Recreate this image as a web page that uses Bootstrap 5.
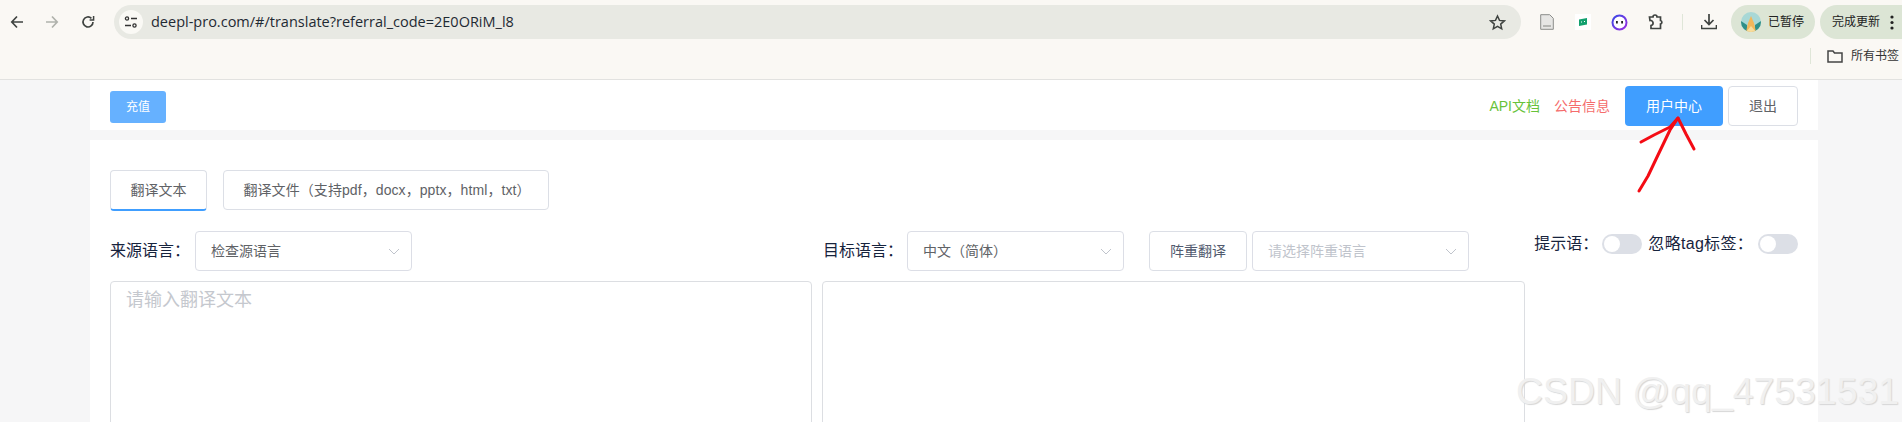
<!DOCTYPE html>
<html lang="zh-CN">
<head>
    <meta charset="UTF-8">
    <title>翻译</title>
    <link href="https://cdn.jsdelivr.net/npm/bootstrap@5.3.3/dist/css/bootstrap.min.css" rel="stylesheet">
    <style>
        html, body { height: 422px; overflow: hidden; }
        body { background: #f6f6f7; font-family: "Liberation Sans", "Noto Sans CJK SC", sans-serif; position: relative; color: #515a6e; }

        /* browser chrome */
        .chrome { height: 80px; background: #faf8f4; border-bottom: 1px solid #e2e2e0; padding: 5px 0 0 0; }
        .chrome-row { height: 34px; }
        .nav-ico { width: 37px; flex: none; display: flex; justify-content: center; }
        .nav-box { width: 114px; flex: none; padding-left: 0; }
        .addr { width: 1407px; flex: none; height: 34px; background: #e8e9e3; border-radius: 17px; padding: 0 15px 0 5px; }
        .addr-site { width: 24px; height: 24px; border-radius: 50%; background: #faf9f5; margin-right: 8px; }
        .addr-url { font-family: "Open Sans", "Liberation Sans", sans-serif; font-size: 14.5px; color: #1f2a33; }
        .ext-sep { width: 1px; height: 16px; background: #dfe6d8; margin-left: 18px; }
        .paused { width: 84px; height: 34px; border-radius: 17px; background: #dce5d5; font-size: 12px; color: #222; flex: none; padding-left: 10px; margin-left: 14px; gap: 7px; }
        .updated { width: 82px; height: 34px; border-radius: 17px 0 0 17px; background: #dce5d5; font-size: 12px; color: #222; flex: none; margin-left: 5px; padding-left: 12px; gap: 10px; white-space: nowrap; }
        .marks-row { height: 24px; margin-top: 5px; padding-right: 3px; font-size: 12px; color: #333; }
        .marks-sep { width: 1px; height: 16px; background: #dfe6d8; margin-right: 16px; }

        /* page */
        .page-wrap { width: 1728px; margin-left: 90px; }
        .top-panel { height: 50px; background: #fff; padding: 6px 20px; margin-bottom: 10px; }
        .recharge { width: 56px; height: 32px; margin-top: 5px; background: #66b1ff; color: #fff; font-size: 12px; border-radius: 3px; }
        .doc-link { font-size: 14px; color: #67c23a; margin-right: 14px; }
        .notice-link { font-size: 14px; color: #f56c6c; margin-right: 15px; }
        .user-btn { width: 98px; height: 40px; background: #409eff; color: #fff; font-size: 14px; border-radius: 4px; margin-right: 5px; }
        .plain-btn { height: 40px; background: #fff; border: 1px solid #dcdfe6; border-radius: 4px; color: #606266; font-size: 14px; display: flex; align-items: center; justify-content: center; }
        .logout-btn { width: 70px; }
        .main-panel { height: 282px; background: #fff; padding: 30px 20px 0 20px; }
        .tab-active { width: 97px; height: 41px; border-bottom: 2px solid #409eff; margin-right: 16px; }
        .tab-file { width: 326px; height: 40px; letter-spacing: .08px; padding-left: 2px; }
        .tools-row { margin-top: 20px; height: 40px; }
        .lang-label { font-size: 16px; color: #17233d; white-space: nowrap; }
        .lang-select { width: 217px; height: 40px; border: 1px solid #dcdee6; border-radius: 4px; padding: 0 11px 0 15px; font-size: 14px; color: #606266; flex: none; }
        .muted-val { color: #c0c4cc; }
        .heavy-btn { width: 98px; flex: none; margin: 0 5px 0 25px; color: #515a6e; }
        .switch-box { font-size: 16px; color: #17233d; white-space: nowrap; margin-top: -14px; }
        .tag-label { margin: 0 5px 0 6px; letter-spacing: .3px; }
        .fake-switch { width: 40px; height: 20px; border-radius: 10px; background: #dcdfe6; padding: 2px; flex: none; }
        .fake-switch span { display: block; width: 16px; height: 16px; border-radius: 50%; background: #fff; }
        .text-areas { margin-top: 10px; gap: 10px; }
        .text-box { width: 702px; height: 200px; flex: none; border: 1px solid #dcdee2; border-radius: 4px; padding: 5px 15px; font-size: 18px; color: #c5c8ce; }
        .text-box + .text-box { width: 703px; }

        /* overlays */
        .red-arrow { position: absolute; left: 0; top: 0; pointer-events: none; }
        .water { position: absolute; left: 1516px; top: 369px; font-size: 37.4px; line-height: 44px; color: #f0f0f0; text-shadow: 1px 1px 1px #d6d6d6; white-space: nowrap; }
    </style>
</head>
<body>
    <div class="chrome">
        <div class="d-flex align-items-center chrome-row">
            <div class="nav-box d-flex align-items-center">
                <div class="nav-ico" style="width:33px">
                    <svg width="14" height="14" viewBox="0 0 14 14" fill="none" stroke="#3f4340" stroke-width="1.7"><path d="M13 7H2M7 1.5 1.8 7 7 12.5"/></svg>
                </div>
                <div class="nav-ico">
                    <svg width="14" height="14" viewBox="0 0 14 14" fill="none" stroke="#b0b2ac" stroke-width="1.7"><path d="M1 7h11M7 1.5 12.2 7 7 12.5"/></svg>
                </div>
                <div class="nav-ico" style="width:36px">
                    <svg width="14" height="14" viewBox="0 0 14 14" fill="none" stroke="#3f4340" stroke-width="1.7"><path d="M12 7a5 5 0 1 1-1.6-3.7"/><path d="M12.6 1v4h-4" stroke-width="1.5"/></svg>
                </div>
            </div>
            <div class="addr d-flex align-items-center">
                <div class="addr-site d-flex align-items-center justify-content-center">
                    <svg width="14" height="14" viewBox="0 0 14 14" fill="none" stroke="#333" stroke-width="1.3"><circle cx="3" cy="3.5" r="1.6"/><path d="M7 3.5h6M1 10.5h6"/><circle cx="10.5" cy="10.5" r="1.6"/></svg>
                </div>
                <span class="addr-url">deepl-pro.com/#/translate?referral_code=2E0ORiM_l8</span>
                <svg class="ms-auto" width="17" height="17" viewBox="0 0 17 17" fill="none" stroke="#3f4340" stroke-width="1.5"><path d="m8.5 2 2 4.4 4.8.5-3.6 3.2 1 4.7-4.2-2.4-4.2 2.4 1-4.7L1.7 6.9l4.8-.5z"/></svg>
            </div>
            <svg style="margin-left:19px" width="14" height="16" viewBox="0 0 14 16"><path d="M.7.7h9l3.6 3.6v11H.7z" fill="#e6e6e4" stroke="#8b8d8a"/><path d="M3 11h8v2H3z" fill="#b5b6b3"/></svg>
            <svg style="margin-left:21px" width="16" height="16" viewBox="0 0 16 16"><rect width="16" height="16" fill="#fff"/><path d="M4 5.5l8-1.5v6.500l-8 1.500z" fill="#12a06e"/><path d="M6 7.500h1v1H6zM9 7h1v1H9z" fill="#fff"/></svg>
            <svg style="margin-left:20px" width="17" height="17" viewBox="0 0 17 17"><defs><linearGradient id="ringgrad" x1="0" y1="0" x2="1" y2="1"><stop offset="0" stop-color="#3a49e6"/><stop offset="1" stop-color="#9a2fe0"/></linearGradient></defs><circle cx="8.500" cy="8.500" r="7" fill="#fff" stroke="url(#ringgrad)" stroke-width="2"/><path d="M5 7h1.800v2.600H5zM10.200 7H12v2.600h-1.800z" fill="#222"/></svg>
            <svg style="margin-left:20px" width="16" height="16" viewBox="0 0 16 16" fill="none" stroke="#3f4340" stroke-width="1.7"><path d="M1.500 3H5a2 2 0 0 1 4 0h3.500v3.500a1.800 1.800 0 0 1 0 3.500v4.500H3v-3a2.200 2.200 0 0 0-1-5z"/></svg>
            <div class="ext-sep"></div>
            <svg style="margin-left:18px" width="16" height="16" viewBox="0 0 16 16" fill="none" stroke="#3f4340" stroke-width="1.700"><path d="M8 0v10M3.500 6 8 10.500 12.500 6M.500 11v3.500h15V11"/></svg>
            <div class="paused d-flex align-items-center">
                <svg width="20" height="20" viewBox="0 0 20 20"><clipPath id="avatarclip"><circle cx="10" cy="10" r="10"/></clipPath><g clip-path="url(#avatarclip)"><rect width="20" height="20" fill="#a8d8d6"/><path d="M0 9 6 13v7H0zM20 9l-6 4v7h6z" fill="#2f8f88"/><path d="M10 4l3 7 2 9H5l2-9z" fill="#f2b65a"/><path d="M5 20l5-6 5 6z" fill="#f7dc9c"/></g></svg>
                <span>已暂停</span>
            </div>
            <div class="updated d-flex align-items-center"><span>完成更新</span><svg width="4" height="15" viewBox="0 0 4 15" fill="#222"><circle cx="2" cy="2" r="1.600"/><circle cx="2" cy="7.500" r="1.600"/><circle cx="2" cy="13" r="1.600"/></svg></div>
        </div>
        <div class="marks-row d-flex align-items-center justify-content-end">
            <div class="marks-sep"></div>
            <svg width="16" height="13" viewBox="0 0 16 13" fill="none" stroke="#444" stroke-width="1.5"><path d="M1 1h5l1.500 2H15v9H1z"/></svg>
            <span class="ms-2 text-nowrap">所有书签</span>
        </div>
    </div>

    <div class="page-wrap">
        <div class="top-panel d-flex align-items-start">
            <button class="btn recharge p-0 border-0">充值</button>
            <div class="ms-auto d-flex align-items-center" style="height:40px">
                <span class="doc-link">API文档</span>
                <span class="notice-link">公告信息</span>
                <button class="btn user-btn p-0 border-0">用户中心</button>
                <div class="plain-btn logout-btn">退出</div>
            </div>
        </div>

        <div class="main-panel">
            <div class="d-flex">
                <div class="plain-btn tab-active">翻译文本</div>
                <div class="plain-btn tab-file">翻译文件（支持pdf，docx，pptx，html，txt）</div>
            </div>
            <div class="tools-row d-flex align-items-center">
                <span class="lang-label" style="width:85px">来源语言：</span>
                <div class="lang-select d-flex align-items-center justify-content-between">
                    <span>检查源语言</span>
                    <svg width="12" height="7" viewBox="0 0 12 7" fill="none" stroke="#c0c4cc"><path d="m1 1 5 5 5-5"/></svg>
                </div>
                <span class="lang-label" style="margin-left:411px;width:84px">目标语言：</span>
                <div class="lang-select d-flex align-items-center justify-content-between">
                    <span>中文（简体）</span>
                    <svg width="12" height="7" viewBox="0 0 12 7" fill="none" stroke="#c0c4cc"><path d="m1 1 5 5 5-5"/></svg>
                </div>
                <div class="plain-btn heavy-btn">阵重翻译</div>
                <div class="lang-select d-flex align-items-center justify-content-between">
                    <span class="muted-val">请选择阵重语言</span>
                    <svg width="12" height="7" viewBox="0 0 12 7" fill="none" stroke="#c0c4cc"><path d="m1 1 5 5 5-5"/></svg>
                </div>
                <div class="switch-box ms-auto d-flex align-items-center">
                    <span style="margin-right:4px">提示语：</span>
                    <div class="fake-switch"><span></span></div>
                    <span class="tag-label">忽略tag标签：</span>
                    <div class="fake-switch"><span></span></div>
                </div>
            </div>
            <div class="text-areas d-flex">
                <div class="text-box">请输入翻译文本</div>
                <div class="text-box"></div>
            </div>
        </div>
    </div>

    <svg class="red-arrow" width="1902" height="422" viewBox="0 0 1902 422" fill="none" stroke="#f40b14" stroke-width="3" stroke-linejoin="round" stroke-linecap="round">
        <path d="M1641 142 1654 135 1670 127 1678 118 1686 134 1694 149"/>
        <path d="M1678 118 1670 130 1658 155 1648 176 1639 191"/>
    </svg>
    <div class="water">CSDN @qq_47531531</div>
</body>
</html>
